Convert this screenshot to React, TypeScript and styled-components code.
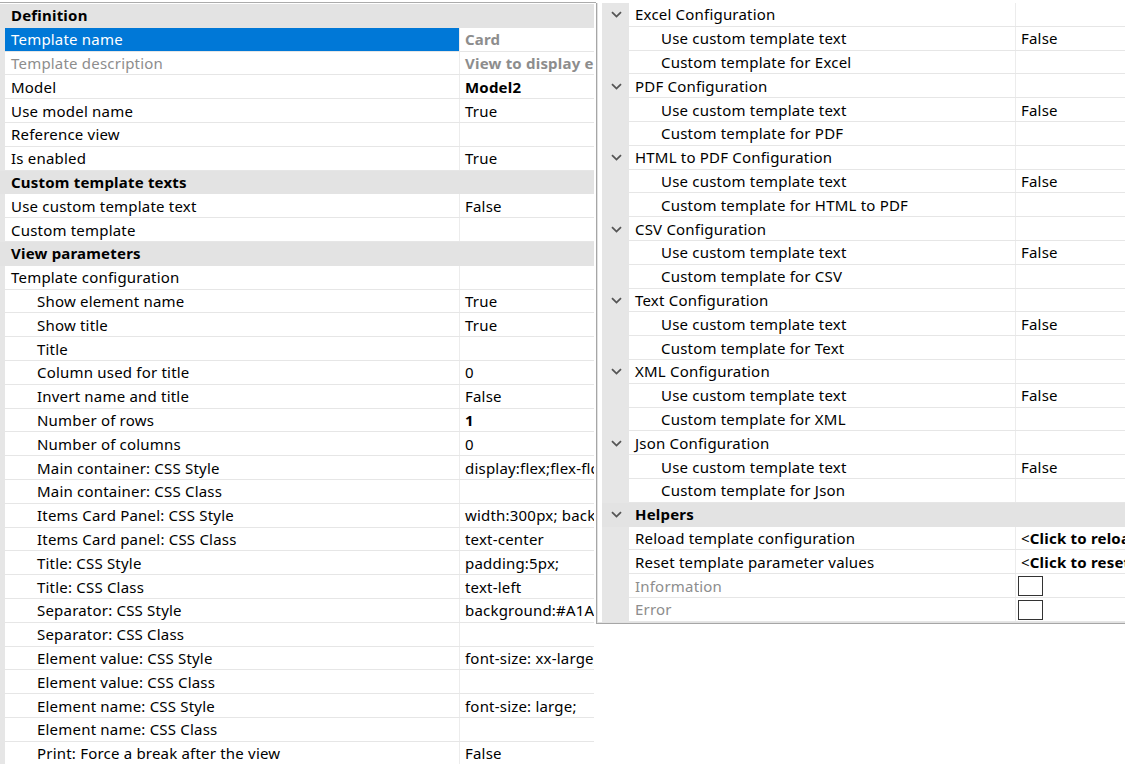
import type { FC } from 'react';
import styled, { createGlobalStyle } from 'styled-components';

interface IProp {
    label: string;
    value?: string;
    kind?: 'category' | 'group' | 'prop';
    level?: number;
    boldValue?: boolean;
    disabled?: boolean;
    mutedValue?: boolean;
    selected?: boolean;
    checkbox?: boolean;
    action?: string;
}

const ROW_H = 23.8;

const GlobalStyle = createGlobalStyle`
    html, body {
        margin: 0;
        padding: 0;
        background: #ffffff;
        overflow: hidden;
    }

    body {
        font-family: "Noto Sans", "Open Sans", sans-serif;
        font-size: 15px;
        letter-spacing: 0.2px;
        line-height: 18px;
        color: #000000;
    }
`;

const Page = styled.div`
    display: flex;
    align-items: flex-start;
    width: 1125px;
    height: 764px;
    overflow: hidden;
`;

const LeftGrid = styled.div`
    flex: 0 0 596px;
    margin-top: 2px;
    padding-right: 2px;
    box-sizing: border-box;
    border-top: 1px solid #ababab;
    padding-top: 1px;
`;

const RightGrid = styled.div`
    flex: 0 0 560px;
    margin-top: 3px;
    padding-left: 5px;
    border-left: 1px solid #a6a6a6;
    border-bottom: 1px solid #a6a6a6;
    box-shadow: inset 1px 0 0 #e2e2e2, inset 0 -1px 0 #e2e2e2;
    padding-bottom: 1px;
`;

const Row = styled.div<{ $gutter: number; $name: number; $category?: boolean }>`
    display: grid;
    grid-template-columns: ${({ $gutter, $name }) => `${$gutter}px ${$name}px 1fr`};
    height: ${ROW_H}px;
    background: ${({ $category }) => $category ? '#e3e3e3' : '#e6e6e6'};
`;

const Gutter = styled.div`
    display: flex;
    align-items: center;
    justify-content: center;
    padding-left: 2px;
`;

const NameCell = styled.div<{ $level: number; $selected?: boolean; $disabled?: boolean; $category?: boolean; $span?: boolean }>`
    grid-column: ${({ $span }) => $span ? '2 / 4' : 'auto'};
    display: flex;
    align-items: center;
    padding-left: ${({ $level }) => 6 + $level * 26}px;
    box-sizing: border-box;
    white-space: nowrap;
    overflow: hidden;
    height: ${ROW_H - 1}px;
    background: ${({ $selected, $category }) => $selected ? '#0078d7' : $category ? '#e3e3e3' : '#ffffff'};
    color: ${({ $selected, $disabled }) => $selected ? '#ffffff' : $disabled ? '#8d8d8d' : '#000000'};
    font-weight: ${({ $category }) => $category ? 700 : 400};
    border-right: ${({ $span }) => $span ? 'none' : '1px solid #ececec'};
`;

const ValueCell = styled.div<{ $bold?: boolean; $muted?: boolean }>`
    display: flex;
    align-items: center;
    padding-left: 5px;
    height: ${ROW_H - 1}px;
    background: #ffffff;
    white-space: nowrap;
    overflow: hidden;
    font-weight: ${({ $bold }) => $bold ? 700 : 400};
    color: ${({ $muted }) => $muted ? '#8d8d8d' : '#000000'};
`;

const CheckBox = styled.span`
    display: block;
    width: 23px;
    height: 18px;
    margin-left: -3px;
    margin-top: 1px;
    border: 1px solid #333333;
    background: #ffffff;
`;

const ActionLead = styled.span`
    font-weight: 400;
`;

const Chevron: FC = () => (
    <svg width="11" height="7" viewBox="0 0 11 7">
        <path d="M1 1.2 L5.5 5.6 L10 1.2" fill="none" stroke="#555555" strokeWidth="1.8" />
    </svg>
);

const leftItems: IProp[] = [
    { label: 'Definition', kind: 'category' },
    { label: 'Template name', value: 'Card', selected: true, boldValue: true, mutedValue: true },
    { label: 'Template description', value: 'View to display elements as cards', disabled: true, boldValue: true, mutedValue: true },
    { label: 'Model', value: 'Model2', boldValue: true },
    { label: 'Use model name', value: 'True' },
    { label: 'Reference view', value: '' },
    { label: 'Is enabled', value: 'True' },
    { label: 'Custom template texts', kind: 'category' },
    { label: 'Use custom template text', value: 'False' },
    { label: 'Custom template', value: '' },
    { label: 'View parameters', kind: 'category' },
    { label: 'Template configuration', value: '' },
    { label: 'Show element name', value: 'True', level: 1 },
    { label: 'Show title', value: 'True', level: 1 },
    { label: 'Title', value: '', level: 1 },
    { label: 'Column used for title', value: '0', level: 1 },
    { label: 'Invert name and title', value: 'False', level: 1 },
    { label: 'Number of rows', value: '1', level: 1, boldValue: true },
    { label: 'Number of columns', value: '0', level: 1 },
    { label: 'Main container: CSS Style', value: 'display:flex;flex-flow:row wrap;', level: 1 },
    { label: 'Main container: CSS Class', value: '', level: 1 },
    { label: 'Items Card Panel: CSS Style', value: 'width:300px; background:#FFFFFF;', level: 1 },
    { label: 'Items Card panel: CSS Class', value: 'text-center', level: 1 },
    { label: 'Title: CSS Style', value: 'padding:5px;', level: 1 },
    { label: 'Title: CSS Class', value: 'text-left', level: 1 },
    { label: 'Separator: CSS Style', value: 'background:#A1A1A1;height:1px;', level: 1 },
    { label: 'Separator: CSS Class', value: '', level: 1 },
    { label: 'Element value: CSS Style', value: 'font-size: xx-large;', level: 1 },
    { label: 'Element value: CSS Class', value: '', level: 1 },
    { label: 'Element name: CSS Style', value: 'font-size: large;', level: 1 },
    { label: 'Element name: CSS Class', value: '', level: 1 },
    { label: 'Print: Force a break after the view', value: 'False', level: 1 },
];

const outputs = ['Excel', 'PDF', 'HTML to PDF', 'CSV', 'Text', 'XML', 'Json'];

const rightItems: IProp[] = [
    ...outputs.flatMap((name): IProp[] => [
        { label: `${name} Configuration`, kind: 'group', value: '' },
        { label: 'Use custom template text', value: 'False', level: 1 },
        { label: `Custom template for ${name}`, value: '', level: 1 },
    ]),
    { label: 'Helpers', kind: 'category' },
    { label: 'Reload template configuration', action: 'Click to reload template configuration>' },
    { label: 'Reset template parameter values', action: 'Click to reset template parameter values>' },
    { label: 'Information', disabled: true, checkbox: true },
    { label: 'Error', disabled: true, checkbox: true },
];

interface IGridProps {
    items: IProp[];
    gutter: number;
    name: number;
    chevrons?: boolean;
}

const PropertyRows: FC<IGridProps> = ({ items, gutter, name, chevrons }) => {
    return (
        <>
            {
                items.map((item, index) => {
                    const isCategory = item.kind === 'category';
                    const hasChevron = chevrons && item.kind !== 'prop' && item.kind !== undefined;

                    return (
                        <Row key={index} $gutter={gutter} $name={name} $category={isCategory}>
                            <Gutter>{hasChevron && <Chevron />}</Gutter>
                            <NameCell
                                $level={item.level ?? 0}
                                $selected={item.selected}
                                $disabled={item.disabled}
                                $category={isCategory}
                                $span={isCategory}
                            >
                                {item.label}
                            </NameCell>
                            {
                                !isCategory && (
                                    <ValueCell $bold={item.boldValue || !!item.action} $muted={item.mutedValue}>
                                        {item.checkbox && <CheckBox />}
                                        {item.action && <><ActionLead>&lt;</ActionLead>{item.action}</>}
                                        {item.value}
                                    </ValueCell>
                                )
                            }
                        </Row>
                    );
                })
            }
        </>
    );
}

export default function App() {
    return (
        <>
            <GlobalStyle />
            <Page>
                <LeftGrid>
                    <PropertyRows items={leftItems} gutter={5} name={455} />
                </LeftGrid>
                <RightGrid>
                    <PropertyRows items={rightItems} gutter={27} name={387} chevrons />
                </RightGrid>
            </Page>
        </>
    );
}
